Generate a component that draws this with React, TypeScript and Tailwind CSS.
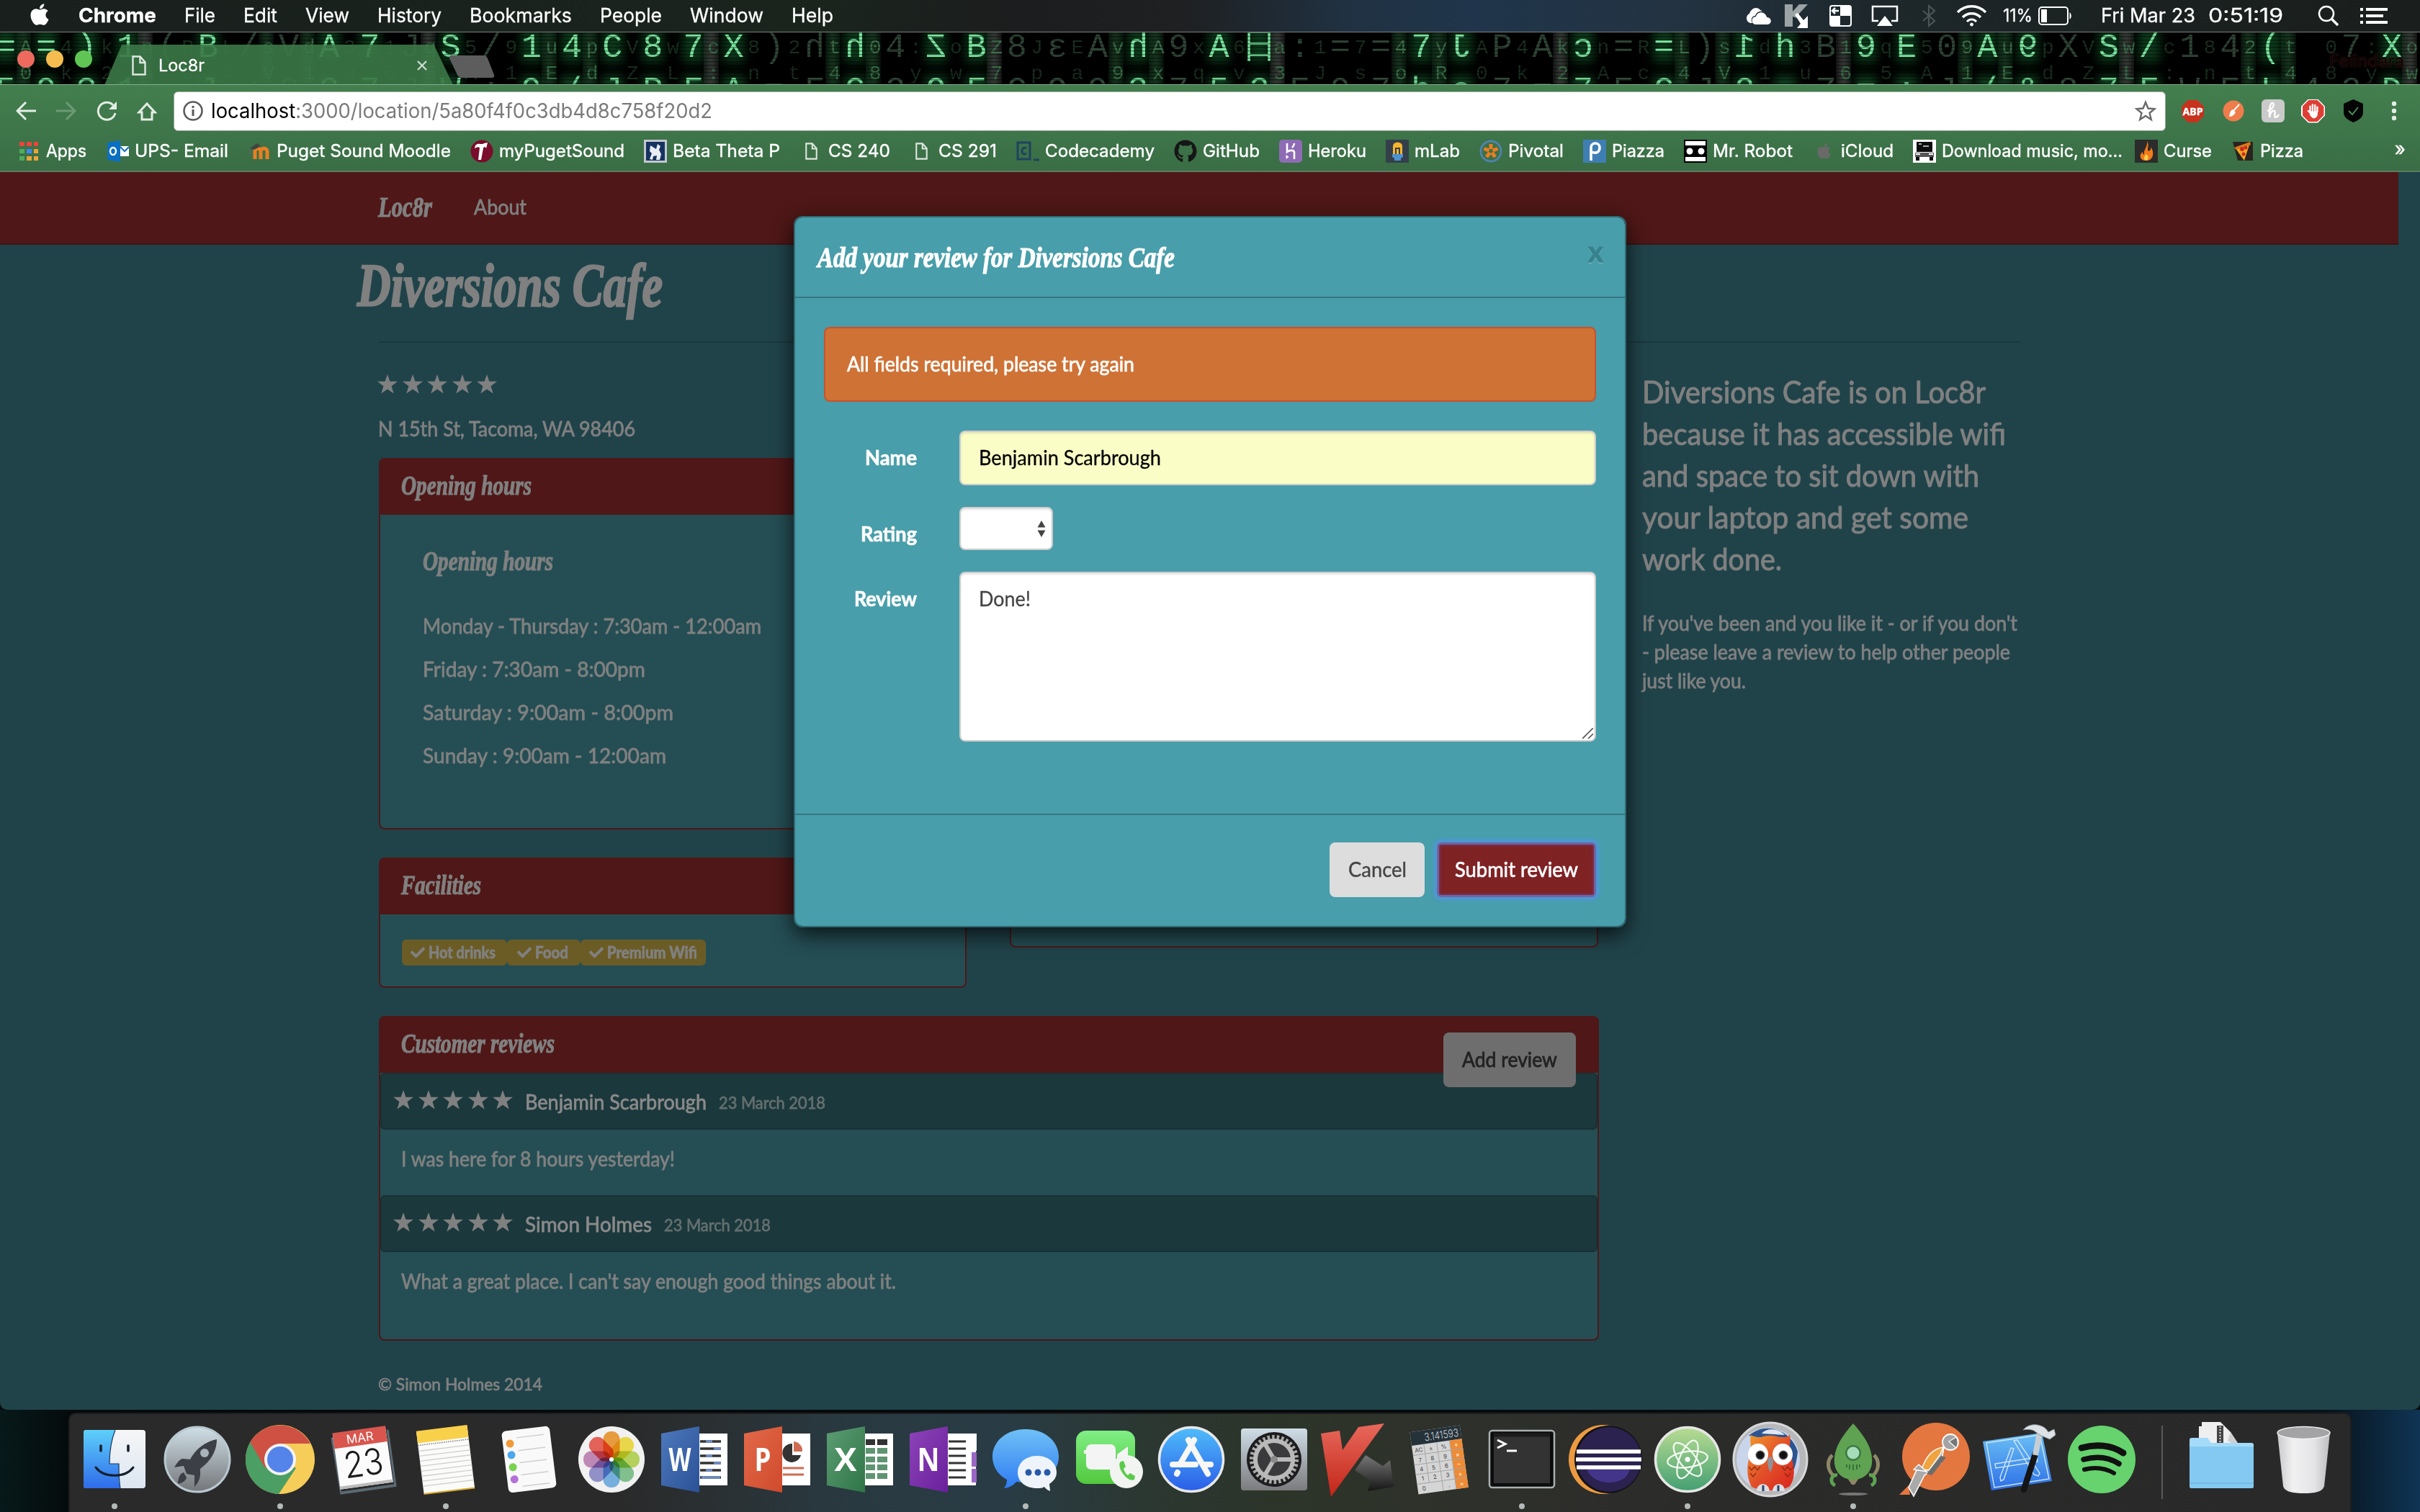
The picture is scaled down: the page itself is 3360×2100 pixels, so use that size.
import { useLayoutEffect, useRef, useState } from "react";
import type { ReactNode } from "react";
import { FaApple, FaGithub, FaCheck } from "react-icons/fa";

/* Text stretched horizontally to fill the width given by its classes. */
function Fit({ className = "", children }: { className?: string; children: ReactNode }) {
  const outer = useRef<HTMLSpanElement>(null);
  const inner = useRef<HTMLSpanElement>(null);
  const [scale, setScale] = useState(1);
  useLayoutEffect(() => {
    if (outer.current && inner.current && inner.current.offsetWidth > 0) {
      setScale(outer.current.clientWidth / inner.current.getBoundingClientRect().width);
    }
  }, []);
  return (
    <span ref={outer} className={"block shrink-0 whitespace-nowrap " + className}>
      <span ref={inner} className="inline-block origin-left" style={{ transform: `scaleX(${scale})` }}>
        {children}
      </span>
    </span>
  );
}

const script = "font-['Liberation_Serif'] font-bold italic [-webkit-text-stroke:1.200px]";

/* ---------- macOS menu bar ---------- */

const menus: [string, string][] = [
  ["Chrome", "w-[108px] font-bold"],
  ["File", "w-[43px]"],
  ["Edit", "w-[47px]"],
  ["View", "w-[61px]"],
  ["History", "w-[89px]"],
  ["Bookmarks", "w-[142px]"],
  ["People", "w-[86px]"],
  ["Window", "w-[102px]"],
  ["Help", "w-[58px]"],
];

function MenuBar() {
  return (
    <div className="flex h-[44px] items-center bg-[linear-gradient(90deg,#191f1d_0%,#1a241d_34%,#1c1d1e_42%,#1e2022_49%,#203243_56%,#20354b_61%,#233342_69%,#1e282c_77%,#1b2120_88%,#1a1f1d_100%)] text-[27px] leading-[44px] text-white [-webkit-text-stroke:0.300px]">
      <FaApple className="ml-[38px] size-[34px] -translate-y-[2px]" />
      <div className="ml-[37px] flex gap-[39px]">
        {menus.map(([t, c]) => (
          <Fit key={t} className={c}>{t}</Fit>
        ))}
      </div>
      <div className="ml-auto flex items-center pr-[45px]">
        <svg className="h-[24px] w-[38px]" viewBox="0 0 38 24" fill="#fff">
          <path d="M8 22a7 7 0 0 1-1-13C9 2 17-2 22 4a8 8 0 0 1 3 2c-5-1-9 2-10 6-4 0-6 4-5 8l1 2z" />
          <path d="M16 24a5.500 5.500 0 0 1 0-11c1-6 9-8 13-3 1 1 2 3 2 4 7 0 8 9 1 10z" />
        </svg>
        <svg className="ml-[18px] h-[34px] w-[34px]" viewBox="0 0 34 34">
          <path d="M0 1h11v10L20 1h12L17 17v3l-6-2v14H0z" fill="#9ba3a5" />
          <path d="M14 15l4-2 8 10 6-6v17H17l5-6z" fill="#fff" />
        </svg>
        <svg className="ml-[28px] h-[30px] w-[31px]" viewBox="0 0 31 30">
          <rect x="1" y="1" width="29" height="28" rx="3" fill="none" stroke="#fff" strokeWidth="2" />
          <path d="M15 1h14v14H15zM2 15h13v14H2z" fill="#fff" />
          <path d="M4 8h9M8 4L4 8l4 4" stroke="#fff" strokeWidth="2.500" fill="none" />
          <path d="M18 22h9M23 18l4 4-4 4" stroke="#1e282c" strokeWidth="2.500" fill="none" />
        </svg>
        <svg className="ml-[27px] h-[30px] w-[38px]" viewBox="0 0 38 30">
          <path d="M10 22H2V2h34v20h-8" fill="none" stroke="#fff" strokeWidth="2.500" />
          <path d="M19 15l11 14H8z" fill="#fff" />
        </svg>
        <svg className="ml-[32px] h-[32px] w-[20px]" viewBox="0 0 20 32">
          <path d="M2 9l16 14-8 7V2l8 7L2 23" fill="none" stroke="#4b5456" strokeWidth="2.200" />
        </svg>
        <svg className="ml-[28px] h-[30px] w-[43px]" viewBox="0 0 43 30" fill="none" stroke="#fff" strokeWidth="3.400">
          <path d="M2 10c11-11 28-11 39 0" />
          <path d="M9 17c7-7 18-7 25 0" />
          <path d="M15 23c4-4 9-4 13 0" strokeWidth="3" />
          <circle cx="21.500" cy="27" r="2" fill="#fff" strokeWidth="1" />
        </svg>
        <Fit className="ml-[22px] w-[41px] text-[24px]">11%</Fit>
        <svg className="ml-[8px] h-[26px] w-[47px]" viewBox="0 0 47 26">
          <rect x="1" y="1" width="40" height="24" rx="4" fill="none" stroke="#fff" strokeWidth="2" />
          <rect x="4" y="4" width="8" height="18" fill="#fff" />
          <path d="M43.500 8c3 2 3 8 0 10z" fill="#fff" />
        </svg>
        <Fit className="ml-[40px] w-[131px]">Fri Mar 23</Fit>
        <Fit className="ml-[18px] w-[104px]">0:51:19</Fit>
        <svg className="ml-[48px] h-[30px] w-[30px]" viewBox="0 0 30 30" fill="none" stroke="#fff">
          <circle cx="12" cy="12" r="10" strokeWidth="2.500" />
          <path d="M19 19l9 9" strokeWidth="3.500" />
        </svg>
        <svg className="ml-[29px] h-[22px] w-[38px]" viewBox="0 0 38 22" fill="#fff">
          <path d="M0 0h4v4H0zM0 9h4v4H0zM0 18h4v4H0zM8 0h30v4H8zM8 9h24v4H8zM8 18h30v4H8z" />
        </svg>
      </div>
    </div>
  );
}

/* ---------- themed tab strip ---------- */

const rainTop = Array.from("==)1(B/VA7JS/14C87X)hh4ZB8εAh9A日:==7JPAɔ==)1hB9E0A9XS/14( 7X)h");
const rainLow = Array.from("59?1-J<C87JW:9/JPFA=FG3OFCO93753E97hэ7=7ECJ2-Z=:J/&87FWEL43D( 5Eh");
const rainMid = Array.from("AaE0w5s41v:c9dk7Ao8u3n4xZ2p1Ry6JtVqL");
const bright = new Set([0, 1, 2, 3, 5, 8, 9, 11, 13, 14, 15, 16, 17, 18, 21, 23, 24, 28, 30, 31, 35, 36, 39, 41, 43, 44, 46, 47, 49, 50, 52, 53, 56, 59]);
const mirrored = new Set([20, 21, 23, 28, 36, 43, 50, 59]);

function CodeRain() {
  return (
    <svg className="h-[72px] w-[3360px]" viewBox="0 0 3360 72" fontFamily="Liberation Mono, monospace" textAnchor="middle">
      <defs>
        <filter id="haze" x="-50%" y="-50%" width="200%" height="200%"><feGaussianBlur stdDeviation="7" /></filter>
        <pattern id="scan" width="6" height="5" patternUnits="userSpaceOnUse"><path d="M0 0h6v1.500H0z" fill="#000" opacity="0.4" /></pattern>
      </defs>
      {Array.from({ length: 60 }, (_, i) => {
        const x = 8 + i * 56.15;
        const on = bright.has(i);
        const streak = (i * 5) % 7;
        return (
          <g key={i}>
            {on && <rect x={x - 15} y={-6} width={30} height={48} fill="#186b33" opacity="0.55" filter="url(#haze)" />}
            {on && <rect x={x - 15} y={60} width={30} height={30} fill="#1d6f38" opacity="0.6" filter="url(#haze)" />}
            {streak < 3 && <rect x={x + 20} y={-10} width={10} height={100} fill={streak === 1 ? "#6d766f" : "#2d6b3f"} opacity="0.85" filter="url(#haze)" />}
            <text x={x + 28} y={29} fontSize="28" fill={streak < 3 ? "#3c6e4a" : "#1a3020"}>{rainMid[(i * 7) % 36]}</text>
            <text x={x + 28} y={65} fontSize="28" fill={streak < 3 ? "#376a45" : "#182c1e"}>{rainMid[(i * 11 + 3) % 36]}</text>
            <text
              transform={mirrored.has(i) ? `translate(${x} 34) scale(-1 1)` : `translate(${x} 34)`}
              fontSize="47"
              fill={on ? "#7ce5a0" : "#2f4536"}
            >
              {rainTop[i]}
            </text>
            <text x={x} y={94} fontSize="47" fill={on ? "#6fd492" : "#33493a"}>{rainLow[i]}</text>
          </g>
        );
      })}
      <rect width="3360" height="72" fill="url(#scan)" />
    </svg>
  );
}

function DocIcon({ className }: { className: string }) {
  return (
    <svg className={className} viewBox="0 0 20 28" fill="none" stroke="#dfe8e0" strokeWidth="2.400">
      <path d="M1.500 1.500h10l7 8v17h-17z" />
      <path d="M11.500 2v8h7" />
    </svg>
  );
}

function TabStrip() {
  return (
    <div className="relative h-[74px] overflow-hidden border-b border-t border-b-[#86ad8d] border-t-[#7d8080] bg-black">
      <CodeRain />
      <div className="absolute inset-0 flex items-start">
        <div className="flex gap-[16px] pl-[24px] pt-[25px]">
          <span className="size-[24px] rounded-full bg-[#ee6a5e]" />
          <span className="size-[24px] rounded-full bg-[#f5bd4f]" />
          <span className="size-[24px] rounded-full bg-[#60c554]" />
        </div>
        <div className="ml-[17px] mt-[17px] flex h-[56px] w-[484px] items-center bg-[#3b7847]/90 pl-[38px] pt-[2px] [clip-path:polygon(5%_0,94.500%_0,100%_100%,0_100%)]">
          <DocIcon className="h-[28px] w-[20px]" />
          <Fit className="ml-[17px] w-[64px] text-[23px] text-white [-webkit-text-stroke:0.300px]">Loc8r</Fit>
          <svg className="ml-[295px] size-[14px]" viewBox="0 0 14 14" stroke="#c9dccd" strokeWidth="2.400">
            <path d="M1 1l12 12M13 1L1 13" />
          </svg>
        </div>
        <svg className="-ml-[6px] mt-[32px] h-[31px] w-[64px]" viewBox="0 0 64 31">
          <path d="M4 0h44q4 0 6 4l9 23q1 4-3 4H18q-4 0-6-4L1 4Q0 0 4 0z" fill="#5d5d5d" />
        </svg>
        <Fit className="ml-auto mr-[22px] mt-[22px] w-[104px] text-[24px] text-[#0b0505] [text-shadow:0_0_2px_#6b2020]">Felindara</Fit>
      </div>
    </div>
  );
}

/* ---------- toolbar ---------- */

function Toolbar() {
  return (
    <div className="flex h-[72px] items-center">
      <svg className="ml-[22px] h-[28px] w-[28px]" viewBox="0 0 28 28" fill="none" stroke="#e4ede5" strokeWidth="3">
        <path d="M28 14H3M14 2L2 14l12 12" />
      </svg>
      <svg className="ml-[28px] h-[28px] w-[28px]" viewBox="0 0 28 28" fill="none" stroke="#6c9a74" strokeWidth="3">
        <path d="M0 14h25M14 2l12 12-12 12" />
      </svg>
      <svg className="ml-[28px] h-[28px] w-[28px]" viewBox="0 0 28 28" fill="none" stroke="#e4ede5" strokeWidth="3">
        <path d="M23 6A12 12 0 1 0 26 17" />
        <path d="M28 1v11H17z" fill="#e4ede5" stroke="none" />
      </svg>
      <svg className="ml-[28px] h-[27px] w-[28px]" viewBox="0 0 28 27" fill="none" stroke="#e4ede5" strokeWidth="3">
        <path d="M14 3L3 15h4v10h14V15h4z" />
      </svg>
      <div className="ml-[23px] flex h-[55px] w-[2766px] items-center rounded-[6px] border border-[#9aa59b] bg-white">
        <svg className="ml-[12px] size-[28px]" viewBox="0 0 28 28" fill="none" stroke="#5a5a5a" strokeWidth="2.600">
          <circle cx="14" cy="14" r="12.500" />
          <path d="M14 12v9M14 7v3" strokeWidth="3" />
        </svg>
        <Fit className="ml-[11px] w-[696px] text-[28px] text-[#7b7b7b]">
          <span className="text-black">localhost</span>:3000/location/5a80f4f0c3db4d8c758f20d2
        </Fit>
        <svg className="ml-auto mr-[12px] size-[30px]" viewBox="0 0 30 30" fill="none" stroke="#6a6a6a" strokeWidth="2.400">
          <path d="M15 3l3.500 8.500 9 .7-7 5.800 2.300 9L15 22l-7.800 5 2.300-9-7-5.800 9-.7z" />
        </svg>
      </div>
      <svg className="ml-[21px] size-[33px]" viewBox="0 0 33 33">
        <path d="M10 1h13l9 9v13l-9 9H10l-9-9V10z" fill="#c7321d" />
        <text x="16.500" y="21.800" fontSize="14" fontWeight="700" fill="#fff" stroke="#fff" strokeWidth="0.500" textAnchor="middle" textLength="28" lengthAdjust="spacingAndGlyphs" fontFamily="Open Sans">ABP</text>
      </svg>
      <svg className="ml-[25px] size-[30px]" viewBox="0 0 30 30">
        <circle cx="15" cy="15" r="14.500" fill="#ef7c4b" />
        <path d="M23 6l-8 9" stroke="#fff" strokeWidth="2" />
        <path d="M14 13l4 4c-2 4-5 6-9 6 1-4 1-8 5-10z" fill="#fff" />
      </svg>
      <svg className="ml-[24px] size-[32px]" viewBox="0 0 32 32">
        <rect width="32" height="32" rx="6" fill="#cacaca" />
        <path d="M8 16c8-2 11-10 7-11-4 0-4 11-4 20 1-7 4-10 7-9 2 2-1 8 1 9 2 0 4-2 5-4" fill="none" stroke="#fff" strokeWidth="2.400" />
      </svg>
      <span className="ml-[23px] flex size-[33px] items-center justify-center bg-white [clip-path:polygon(30%_0,70%_0,100%_30%,100%_70%,70%_100%,30%_100%,0_70%,0_30%)]">
        <span className="flex size-[30px] items-center justify-center bg-[#de3f35] [clip-path:polygon(30%_0,70%_0,100%_30%,100%_70%,70%_100%,30%_100%,0_70%,0_30%)]">
          <svg className="h-[22px] w-[18px]" viewBox="0 0 20 24" stroke="#fff" strokeWidth="2.600" strokeLinecap="round" fill="#fff">
            <path d="M5 13V5M8.700 12V2.500M12.500 12V3M16 13V6M5 15l-3-3" />
            <path d="M5 13h11v4c0 4-3 6-5 6s-4-1-6-5z" strokeWidth="1" />
          </svg>
        </span>
      </span>
      <svg className="ml-[26px] h-[32px] w-[27px]" viewBox="0 0 27 32">
        <path d="M13.500 0L27 6v12c0 7-6 11-13.500 14C6 29 0 25 0 18V6z" fill="#050505" />
        <path d="M7 16l5 5 8-10" stroke="#4c8c58" strokeWidth="2" fill="none" />
      </svg>
      <svg className="ml-[39px] h-[28px] w-[8px]" viewBox="0 0 8 28" fill="#e4ede5">
        <circle cx="4" cy="4" r="3.200" />
        <circle cx="4" cy="14" r="3.200" />
        <circle cx="4" cy="24" r="3.200" />
      </svg>
    </div>
  );
}

const box = "size-[32px] shrink-0";

const bookmarks: { name: string; w: string; icon: ReactNode }[] = [
  {
    name: "Apps",
    w: "w-[56px]",
    icon: (
      <svg className={box} viewBox="0 0 32 32">
        <path d="M3 3h7v6H3zM13 3h7v6h-7zM23 3h6v6h-6z" fill="#e8453c" />
        <path d="M3 13h7v6H3zM3 23h7v6H3z" fill="#4fae5b" />
        <path d="M13 13h7v6h-7z" fill="#3f86f4" />
        <path d="M23 13h6v6h-6zM13 23h7v6h-7zM23 23h6v6h-6z" fill="#eaa43a" />
      </svg>
    ),
  },
  {
    name: "UPS- Email",
    w: "w-[130px]",
    icon: (
      <svg className={box} viewBox="0 0 32 32">
        <path d="M2 4l18-3v30L2 28z" fill="#0b6fc4" />
        <ellipse cx="10" cy="16" rx="4" ry="5" fill="none" stroke="#fff" strokeWidth="2.400" />
        <path d="M20 9h12v14H20z" fill="#fff" />
        <path d="M20 10l6 6 6-6" fill="none" stroke="#0b6fc4" strokeWidth="2" />
      </svg>
    ),
  },
  {
    name: "Puget Sound Moodle",
    w: "w-[242px]",
    icon: (
      <svg className={box} viewBox="0 0 32 32" fill="none">
        <path d="M10 27V16c0-5 8-5 8 0v11M18 16c0-5 9-5 9 0v11" stroke="#ea7f22" strokeWidth="5" />
        <path d="M3 12l10-7 5 4-9 5z" fill="#3e4640" />
        <path d="M3 12v9" stroke="#55605a" strokeWidth="2" />
      </svg>
    ),
  },
  {
    name: "myPugetSound",
    w: "w-[174px]",
    icon: (
      <svg className={box} viewBox="0 0 32 32">
        <circle cx="16" cy="16" r="15.500" fill="#7a0c2c" />
        <path d="M7 8c4-5 9 0 12-3l5-1-2 8c-2-3-3-2-4 0l-3 16h-4l2-17c-3-2-4 0-7 1z" fill="#fff" />
      </svg>
    ),
  },
  {
    name: "Beta Theta P",
    w: "w-[149px]",
    icon: (
      <svg className={box} viewBox="0 0 32 32">
        <rect x="1.500" y="1.500" width="29" height="29" fill="#16335f" stroke="#c3c8cf" strokeWidth="3" />
        <path d="M9 8l8 5 2-7 4 3-2 5 3 6-2 8h-5l1-6-5 1-1 5-4-1 3-8-3-3z" fill="#e9edf3" />
      </svg>
    ),
  },
  { name: "CS 240", w: "w-[86px]", icon: <span className={box + " flex items-center justify-center"}><DocIcon className="h-[24px] w-[17px]" /></span> },
  { name: "CS 291", w: "w-[81px]", icon: <span className={box + " flex items-center justify-center"}><DocIcon className="h-[24px] w-[17px]" /></span> },
  {
    name: "Codecademy",
    w: "w-[152px]",
    icon: (
      <svg className={box} viewBox="0 0 32 32" fill="none" stroke="#1f4260" strokeWidth="3">
        <path d="M2 4h17v23H2zM24 28h8" />
        <path d="M14 12c-3-2-6 0-6 4s3 5 6 3" />
      </svg>
    ),
  },
  { name: "GitHub", w: "w-[79px]", icon: <FaGithub className={box + " text-[#161616]"} /> },
  {
    name: "Heroku",
    w: "w-[81px]",
    icon: (
      <svg className={box} viewBox="0 0 32 32">
        <rect width="32" height="32" rx="5" fill="#8f6bb5" />
        <path d="M11 5v12c4-3 10-3 10 1v9M21 5c0 3-1 4-3 6" stroke="#fff" strokeWidth="2.600" fill="none" />
        <path d="M9.500 21l4 3-4 3z" fill="#fff" />
      </svg>
    ),
  },
  {
    name: "mLab",
    w: "w-[63px]",
    icon: (
      <svg className={box} viewBox="0 0 32 32">
        <rect width="32" height="32" fill="#343f4a" />
        <path d="M10 20V9c0-7 13-7 13 0v11z" fill="#f6b52b" />
        <path d="M14 20v-8h5v8" fill="none" stroke="#343f4a" strokeWidth="2" />
        <path d="M9 20h15v4l-3 2v3h-9v-3l-3-2z" fill="#4d91cf" />
      </svg>
    ),
  },
  {
    name: "Pivotal",
    w: "w-[77px]",
    icon: (
      <svg className={box} viewBox="0 0 32 32">
        <circle cx="16" cy="16" r="14" fill="none" stroke="#5183ae" strokeWidth="2.800" />
        <g stroke="#ee7d22" strokeWidth="5">
          <path d="M16 13V6M18.500 15l7-2.500M17.500 18l4.500 6M14.500 18L10 24M13.500 15l-7-2.500" />
        </g>
      </svg>
    ),
  },
  {
    name: "Piazza",
    w: "w-[73px]",
    icon: (
      <svg className={box} viewBox="0 0 32 32">
        <rect width="32" height="32" fill="#3f7eb3" />
        <path d="M11 29V11c0-8 12-8 12 0s-7 8-11 6" fill="none" stroke="#fff" strokeWidth="3.600" />
      </svg>
    ),
  },
  {
    name: "Mr. Robot",
    w: "w-[111px]",
    icon: (
      <svg className={box} viewBox="0 0 32 32">
        <rect width="32" height="32" fill="#000" />
        <path d="M2 2h28v6H2zM2 24h28v6H2z" fill="#fff" />
        <ellipse cx="8" cy="16" rx="4.500" ry="4.500" fill="#fff" />
        <ellipse cx="24" cy="16" rx="4.500" ry="4.500" fill="#fff" />
      </svg>
    ),
  },
  { name: "iCloud", w: "w-[73px]", icon: <span className={box + " flex items-center justify-center"}><FaApple className="size-[25px] text-[#6a6968]" /></span> },
  {
    name: "Download music, mo...",
    w: "w-[251px] -mr-[10px]",
    icon: (
      <svg className={box} viewBox="0 0 32 32">
        <rect width="32" height="32" fill="#fff" />
        <path d="M5 3h22v14H5zM4 24h5v5H4zM23 24h5v5h-5z" fill="#0c0c0c" />
        <path d="M3 18h26v6H3z" fill="#555" />
        <path d="M8 6h4M14 9h8" stroke="#ddd" strokeWidth="1.500" />
        <path d="M4 20h6M22 20h6" stroke="#fff" strokeWidth="2" />
      </svg>
    ),
  },
  {
    name: "Curse",
    w: "w-[67px]",
    icon: (
      <svg className={box} viewBox="0 0 32 32">
        <rect width="32" height="32" fill="#2b2b2b" />
        <path d="M17 2c4 7-1 10 2 14 3-1 4-3 3-6 5 6 5 18-5 19C6 30 6 20 11 17c0 3 1 4 2 3-1-6 5-10 4-18z" fill="#f27a1a" />
        <path d="M16 20c4 3 3 8 0 9-4-1-4-5 0-9z" fill="#ffd04a" />
      </svg>
    ),
  },
  {
    name: "Pizza",
    w: "w-[60px]",
    icon: (
      <svg className={box} viewBox="0 0 32 32">
        <path d="M2 3h28v26H9z" fill="#2a2320" />
        <path d="M5 11L26 4 18 29z" fill="#f3a41f" />
        <path d="M4 11L26 3l1 4L7 14z" fill="#d8791a" />
        <circle cx="15" cy="13" r="3" fill="#c92a24" />
        <circle cx="20" cy="11" r="2.500" fill="#c92a24" />
        <circle cx="17" cy="20" r="2.500" fill="#c92a24" />
      </svg>
    ),
  },
];

function BookmarkBar() {
  return (
    <div className="flex h-[47px] items-center gap-[27px] pb-[9px] pl-[24px] pt-[1px] text-[24px] text-white [-webkit-text-stroke:0.400px]">
      {bookmarks.map((b) => (
        <div key={b.name} className="flex shrink-0 items-center gap-[8px]">
          {b.icon}
          <Fit className={b.w}>{b.name}</Fit>
        </div>
      ))}
      <span className="ml-auto -mt-[6px] pr-[20px] text-[26px]">»</span>
    </div>
  );
}

/* ---------- page ---------- */

function Stars() {
  return (
    <span className="flex gap-[6.500px]">
      {[0, 1, 2, 3, 4].map((i) => (
        <svg key={i} className="h-[27px] w-[28px]" viewBox="0 0 28 27" fill="#808080">
          <path d="M14 0l3.400 9.700H28l-8.500 6.500 3.200 10.300L14 20.400 5.300 26.500l3.200-10.300L0 9.700h10.600z" />
        </svg>
      ))}
    </span>
  );
}

const panel = "rounded-[8px] border-2 border-[#4f1717] bg-[#244e54]";

function PanelHead({ title, w, children }: { title: string; w: string; children?: ReactNode }) {
  return (
    <div className="flex h-[77px] items-start justify-between rounded-t-[5px] bg-[#4f1717] pl-[29px]">
      <Fit className={script + " text-[38px] leading-[73px] " + w}>{title}</Fit>
      {children}
    </div>
  );
}

function Review({ name, nameW, date, text, textW }: { name: string; nameW: string; date: string; text: string; textW: string }) {
  return (
    <div className="h-[170px]">
      <div className="flex h-[79px] items-center rounded-[6px] border-2 border-[#183135] bg-[#1b383c] pl-[16px]">
        <span className="-mt-[4px]"><Stars /></span>
        <Fit className={"ml-[17px] text-[#8a8a8a] " + nameW}>{name}</Fit>
        <Fit className="ml-[17px] mt-[2px] w-[148px] text-[24px] text-[#64706f]">{date}</Fit>
      </div>
      <Fit className={"ml-[29px] leading-[80px] " + textW}>{text}</Fit>
    </div>
  );
}

function LocationPage() {
  return (
    <div className="h-[1719px] overflow-hidden rounded-b-[10px] bg-[#20434a] font-['Lato',sans-serif] text-[29px] leading-[40px] text-[#808080] [-webkit-text-stroke:0.800px]">
      <div className="flex h-[101px] w-[3330px] items-center border-b-2 border-[#401416] bg-[#4f1717] pb-[3px] pl-[525px]">
        <Fit className={script + " w-[75px] text-[41px]"}>Loc8r</Fit>
        <Fit className="ml-[58px] w-[73px]">About</Fit>
      </div>
      <h1 className={script + " ml-[496px] h-[112px] pt-[1px] text-[84px] leading-[112px] [-webkit-text-stroke:2.500px]"}>
        <Fit className="w-[424px]">Diversions Cafe</Fit>
      </h1>
      <div className="ml-[526px] mt-[22px] h-[2px] w-[2280px] bg-[#1b383c]" />
      <div className="ml-[526px] flex gap-[60px]">
        <div className="w-[1694px]">
          <div className="flex gap-[61px] pt-[44px]">
            <div className="w-[816px]">
              <div className="-ml-[2px]"><Stars /></div>
              <Fit className="-ml-[1px] mt-[28px] w-[357px]">N 15th St, Tacoma, WA 98406</Fit>
              <section className={panel + " mt-[21px] h-[516px]"}>
                <PanelHead title="Opening hours" w="w-[181px]" />
                <div className="pl-[59px] pt-[39px]">
                  <Fit className={script + " w-[181px] text-[38px] leading-[50px]"}>Opening hours</Fit>
                  <div className="mt-[35px] leading-[60px]">
                    <Fit className="w-[470px]">Monday - Thursday : 7:30am - 12:00am</Fit>
                    <Fit className="w-[309px]">Friday : 7:30am - 8:00pm</Fit>
                    <Fit className="w-[348px]">Saturday : 9:00am - 8:00pm</Fit>
                    <Fit className="w-[338px]">Sunday : 9:00am - 12:00am</Fit>
                  </div>
                </div>
              </section>
              <section className={panel + " mt-[39px] h-[181px]"}>
                <PanelHead title="Facilities" w="w-[111px]" />
                <div className="flex pl-[30px] pt-[35px] text-[22px] font-bold leading-[36px]">
                  <span className="flex w-[146px] items-center rounded-[6px] bg-[#6b5c25] pl-[12px]">
                    <FaCheck className="size-[20px]" />
                    <Fit className="ml-[5px] w-[93px]">Hot drinks</Fit>
                  </span>
                  <span className="flex w-[102px] items-center rounded-[6px] bg-[#6b5c25] pl-[14px]">
                    <FaCheck className="size-[20px]" />
                    <Fit className="ml-[5px] w-[46px]">Food</Fit>
                  </span>
                  <span className="flex w-[174px] items-center rounded-[6px] bg-[#6b5c25] pl-[12px]">
                    <FaCheck className="size-[20px]" />
                    <Fit className="ml-[5px] w-[125px]">Premium Wifi</Fit>
                  </span>
                </div>
              </section>
            </div>
            <section className={panel + " -ml-[1px] h-[796px] w-[817px]"} />
          </div>
          <section className={panel + " mt-[39px] h-[451px]"}>
            <PanelHead title="Customer reviews" w="w-[213px]">
              <button className="relative mr-[30px] mt-[21px] flex h-[76px] w-[184px] items-center justify-center rounded-[8px] bg-[#6e6e6e] pb-[2px] text-[#222]">
                <Fit className="w-[132px]">Add review</Fit>
              </button>
            </PanelHead>
            <Review name="Benjamin Scarbrough" nameW="w-[252px]" date="23 March 2018" text="I was here for 8 hours yesterday!" textW="w-[380px]" />
            <Review name="Simon Holmes" nameW="w-[176px]" date="23 March 2018" text="What a great place. I can't say enough good things about it." textW="w-[687px]" />
          </section>
          <footer className="-ml-[1px] mt-[40px] text-[24px]">
            <Fit className="w-[228px]">© Simon Holmes 2014</Fit>
          </footer>
        </div>
        <aside className="pt-[39px]">
          <div className="text-[43px] leading-[58px] [-webkit-text-stroke:1px]">
            <Fit className="w-[477px]">Diversions Cafe is on Loc8r</Fit>
            <Fit className="w-[505px]">because it has accessible wifi</Fit>
            <Fit className="w-[468px]">and space to sit down with</Fit>
            <Fit className="w-[453px]">your laptop and get some</Fit>
            <Fit className="w-[194px]">work done.</Fit>
          </div>
          <div className="mt-[40px]">
            <Fit className="w-[521px]">If you've been and you like it - or if you don't</Fit>
            <Fit className="w-[511px]">- please leave a review to help other people</Fit>
            <Fit className="w-[144px]">just like you.</Fit>
          </div>
        </aside>
      </div>
    </div>
  );
}

/* ---------- review dialog ---------- */

function FieldRow({ label, labelW, className, children }: { label: string; labelW: string; className: string; children: ReactNode }) {
  return (
    <div className={"flex items-start " + className}>
      <div className="mr-[59px] flex w-[130px] justify-end font-bold leading-[74px]">
        <Fit className={labelW}>{label}</Fit>
      </div>
      {children}
    </div>
  );
}

const field = "rounded-[8px] border-2 border-[#ccc] pl-[25px] leading-[70px] shadow-[inset_0_2px_3px_rgba(0,0,0,0.100)]";

function ReviewDialog() {
  return (
    <div className="absolute left-[1102px] top-[300px] flex h-[988px] w-[1156px] flex-col rounded-[12px] border-2 border-[#306972] bg-[#489eaa] bg-clip-padding font-['Lato',sans-serif] text-[29px] leading-[40px] text-white shadow-[0_10px_30px_rgba(0,0,0,0.750)] [-webkit-text-stroke:0.700px]">
      <div className="flex h-[112px] items-start justify-between border-b-2 border-[#367680] pl-[31px] pr-[30px]">
        <Fit className={script + " w-[496px] text-[41px] leading-[110px]"}>Add your review for Diversions Cafe</Fit>
        <span className="mt-[27px] text-[40px] font-bold leading-[40px] text-[#37818c] [-webkit-text-stroke:1px] [text-shadow:0_2px_0_#6fb5be]">x</span>
      </div>
      <div className="h-[716px] pl-[39px] pr-[40px] pt-[40px]">
        <div className="ml-[1px] h-[104px] rounded-[8px] border-2 border-[#c9512d] bg-[#cf7235] pl-[30px]">
          <Fit className="w-[399px] leading-[98px]">All fields required, please try again</Fit>
        </div>
        <FieldRow label="Name" labelW="w-[72px]" className="mt-[40px] h-[76px]">
          <div className={field + " h-[76px] w-[884px] bg-[#fafdc5] text-black [-webkit-text-stroke:0.300px]"}>
            <Fit className="w-[253px]">Benjamin Scarbrough</Fit>
          </div>
        </FieldRow>
        <FieldRow label="Rating" labelW="w-[78px]" className="mt-[30px] h-[60px]">
          <div className={field + " flex h-[60px] w-[130px] items-center justify-end bg-white pr-[8px]"}>
            <svg className="h-[23px] w-[12px]" viewBox="0 0 12 23" fill="#444">
              <path d="M6 0l5.500 9.500H.5zM6 23L.5 13.500h11z" />
            </svg>
          </div>
        </FieldRow>
        <FieldRow label="Review" labelW="w-[87px]" className="mt-[30px] h-[236px]">
          <div className={field + " flex h-[236px] w-[884px] items-start justify-between bg-white text-[#444] [-webkit-text-stroke:0.300px]"}>
            <Fit className="w-[72px]">Done!</Fit>
            <svg className="mb-[2px] mr-[2px] size-[15px] self-end" viewBox="0 0 15 15" stroke="#555" strokeWidth="1.600">
              <path d="M0 15L15 0M8 15l7-7" />
            </svg>
          </div>
        </FieldRow>
      </div>
      <div className="flex flex-1 justify-end gap-[17px] border-t-2 border-[#367680] pr-[40px] pt-[38px]">
        <button className="flex h-[76px] w-[132px] items-center justify-center rounded-[8px] bg-[#ddd] pb-[2px] text-[#444] [-webkit-text-stroke:0.400px]">
          <Fit className="w-[81px]">Cancel</Fit>
        </button>
        <button className="flex h-[76px] w-[221px] items-center justify-center rounded-[6px] border-[3px] border-[#6d65a4] bg-[#7f2224] pb-[2px] shadow-[0_0_5px_4px_#4f96dc,inset_0_0_3px_2px_#7a3050]">
          <Fit className="w-[171px]">Submit review</Fit>
        </button>
      </div>
    </div>
  );
}

/* ---------- dock ---------- */

function OfficeIcon({ letter, from, to, children }: { letter: string; from: string; to: string; children: ReactNode }) {
  return (
    <>
      <defs>
        <linearGradient id={"of" + letter} x1="0" x2="1" y1="0" y2="1">
          <stop offset="0" stopColor={from} />
          <stop offset="1" stopColor={to} />
        </linearGradient>
      </defs>
      <path d="M57 14h39v72H57z" fill="#fff" />
      {children}
      <path d="M4 14L57 4v92L4 86z" fill={"url(#of" + letter + ")"} />
      <text x="30" y="66" fontSize="44" fontWeight="700" fill="#fff" textAnchor="middle" textLength={letter === "P" ? 23 : 31} lengthAdjust="spacingAndGlyphs" fontFamily="Open Sans">{letter}</text>
    </>
  );
}

const petals = ["#f39a2d", "#f6e03a", "#b9d84e", "#7cc48a", "#6fb1e8", "#8f8fd0", "#c583b8", "#f0574c"];

const dock: { id: string; on?: boolean; art: ReactNode }[] = [
  {
    id: "finder",
    on: true,
    art: (
      <>
        <defs>
          <linearGradient id="fb" x1="0" x2="0" y1="0" y2="1"><stop offset="0" stopColor="#5ed0fa" /><stop offset="1" stopColor="#2f6bea" /></linearGradient>
          <linearGradient id="fw" x1="0" x2="0" y1="0" y2="1"><stop offset="0" stopColor="#f6f6f7" /><stop offset="1" stopColor="#dce6f2" /></linearGradient>
        </defs>
        <rect x="7" y="9" width="86" height="81" rx="4" fill="url(#fw)" />
        <path d="M51 9H11q-4 0-4 4v73q0 4 4 4h47c-2-11-2-22-2-34H43c0-17 3-34 8-47z" fill="url(#fb)" />
        <path d="M51 9c-5 13-8 30-8 47h13c0 12 0 23 2 34" fill="none" stroke="#1d3a5c" strokeWidth="1.200" />
        <path d="M31 31v7M69 31v7" stroke="#16212e" strokeWidth="3.600" strokeLinecap="round" />
        <path d="M24 61c11 15 41 15 52 0" fill="none" stroke="#16212e" strokeWidth="3" strokeLinecap="round" />
      </>
    ),
  },
  {
    id: "launchpad",
    art: (
      <>
        <defs><linearGradient id="lp" x1="0" x2="0" y1="0" y2="1"><stop offset="0" stopColor="#cfdfe6" /><stop offset="1" stopColor="#747679" /></linearGradient></defs>
        <circle cx="50" cy="50" r="45" fill="url(#lp)" stroke="#b9c8d0" strokeWidth="3" />
        <path d="M77 22C61 25 47 36 40 50l-11-1c-5 2-8 7-11 12l13-2 4 11 11 2 0 16c4-4 7-9 8-16l0-9C69 52 77 38 77 22z" fill="#3c4046" />
        <circle cx="60" cy="41" r="6" fill="#a9b4ba" />
        <path d="M31 68c-5 1-8 8-8 16 6-1 11-4 12-9z" fill="#3c4046" />
      </>
    ),
  },
  {
    id: "chrome",
    on: true,
    art: (
      <>
        <circle cx="50" cy="50" r="48" fill="#f6cd58" />
        <path d="M50 50L8.400 26A48 48 0 0 0 48 98l24-36z" fill="#4b9e64" />
        <path d="M8.400 26A48 48 0 0 1 92 28H50l-21 34z" fill="#ce5144" />
        <circle cx="50" cy="50" r="22" fill="#f3f3f3" />
        <circle cx="50" cy="50" r="18" fill="#5484ea" />
      </>
    ),
  },
  {
    id: "calendar",
    art: (
      <g transform="rotate(-8 50 50)">
        <path d="M10 14h4v76h74V14h3v80H12z" fill="#5b6a73" />
        <rect x="13" y="9" width="74" height="78" fill="#fbfbfb" />
        <path d="M13 83h74v4H13z" fill="#bbb" />
        <rect x="13" y="8" width="74" height="22" fill="#d9564e" />
        <text x="50" y="25.500" fontSize="17" fill="#fff" textAnchor="middle" fontFamily="Inter" textLength="38" lengthAdjust="spacingAndGlyphs">MAR</text>
        <text x="50" y="73" fontSize="50" fontWeight="300" fill="#1b1b1b" textAnchor="middle" fontFamily="Inter" textLength="55" lengthAdjust="spacingAndGlyphs">23</text>
      </g>
    ),
  },
  {
    id: "notes",
    on: true,
    art: (
      <g transform="rotate(-7 50 50)">
        <rect x="14" y="7" width="71" height="87" fill="#fbfbfa" />
        <path d="M14 94h71" stroke="#d9a92d" strokeWidth="2" />
        <rect x="14" y="6" width="71" height="17" fill="#f8d04a" />
        <path d="M14 26h71" stroke="#777" strokeWidth="1.500" strokeDasharray="1.500 1.500" />
        <path d="M14 34h71M14 41h71M14 48h71M14 55h71M14 62h71M14 69h71M14 76h71M14 83h71" stroke="#cfcfcd" strokeWidth="1.300" />
      </g>
    ),
  },
  {
    id: "reminders",
    art: (
      <g transform="rotate(-7 50 50)">
        <rect x="17" y="7" width="67" height="86" rx="6" fill="#f9f9f9" />
        <path d="M37 18h38M37 36h38M37 53h38M37 70h38M37 86h38" stroke="#cfcfcf" strokeWidth="1.400" />
        <circle cx="27" cy="25" r="5.500" fill="#f29a38" />
        <circle cx="27" cy="41" r="5.500" fill="#4ba7ee" />
        <circle cx="27" cy="58" r="5.500" fill="#7bd150" />
        <circle cx="27" cy="75" r="5.500" fill="#b472d8" />
      </g>
    ),
  },
  {
    id: "photos",
    art: (
      <>
        <circle cx="50" cy="50" r="46" fill="#f1f1f1" />
        {petals.map((c, i) => (
          <rect key={c} x="38.500" y="11" width="23" height="38" rx="11" fill={c} opacity="0.9" transform={`rotate(${i * 45} 50 50)`} className="mix-blend-multiply" />
        ))}
        <circle cx="50" cy="50" r="3" fill="#fff" />
      </>
    ),
  },
  {
    id: "word",
    art: (
      <OfficeIcon letter="W" from="#4d79bd" to="#2b5196">
        <path d="M58 25h29M58 35h29M58 45h29M58 55h29M58 65h29M58 75h29" stroke="#333" strokeWidth="3.500" />
        <path d="M66 25h9M77 35h10M66 45h9M77 55h10M66 65h9M60 75h26" stroke="#6e8cc4" strokeWidth="3.500" />
      </OfficeIcon>
    ),
  },
  {
    id: "powerpoint",
    art: (
      <OfficeIcon letter="P" from="#e2694a" to="#cf4b2c">
        <path d="M71 28a13 13 0 1 0 12 16H71z" fill="#333" />
        <path d="M73 25a13 13 0 0 1 12 14H73z" fill="#cf6b52" />
        <path d="M58 62h29M58 71h29" stroke="#cf6b52" strokeWidth="3" />
      </OfficeIcon>
    ),
  },
  {
    id: "excel",
    art: (
      <OfficeIcon letter="X" from="#5d9d74" to="#2e7546">
        <path d="M58 22h13v8H58zM74 22h14v8H74z" fill="#333" />
        <path d="M58 34h13v8H58zM74 34h14v8H74zM58 46h13v8H58zM74 46h14v8H74zM58 57h13v8H58zM74 57h14v8H74zM58 69h13v8H58zM74 69h14v8H74z" fill="#5f9473" />
      </OfficeIcon>
    ),
  },
  {
    id: "onenote",
    art: (
      <OfficeIcon letter="N" from="#8c44b8" to="#6a1f9c">
        <path d="M90 14h7v24h-7z" fill="#fff" />
        <path d="M90 40h7v20h-7zM90 63h7v19h-7z" fill="#9a66c4" />
        <path d="M58 25h24M58 35h24M58 45h24M58 55h24M58 65h24M58 75h24" stroke="#333" strokeWidth="3" />
      </OfficeIcon>
    ),
  },
  {
    id: "messages",
    on: true,
    art: (
      <>
        <defs><linearGradient id="ms" x1="0" x2="0" y1="0" y2="1"><stop offset="0" stopColor="#6fc0f7" /><stop offset="1" stopColor="#2f7cf2" /></linearGradient></defs>
        <path d="M50 8C23 8 4 25 4 46c0 14 8 26 20 32 0 6-2 9-4 12 8-1 13-4 17-9 32 5 59-9 59-35C96 25 77 8 50 8z" fill="url(#ms)" />
        <path d="M66 45c-16 0-27 10-27 23s11 22 27 22c4 0 7 0 10-2 2 3 5 5 8 6 0-4-1-7-1-10 6-4 10-9 10-16 0-13-11-23-27-23z" fill="#eef4fa" />
        <circle cx="54" cy="68" r="4.500" fill="#2759a8" /><circle cx="67" cy="68" r="4.500" fill="#2759a8" /><circle cx="80" cy="68" r="4.500" fill="#2759a8" />
      </>
    ),
  },
  {
    id: "facetime",
    art: (
      <>
        <defs><linearGradient id="ft" x1="0" x2="0" y1="0" y2="1"><stop offset="0" stopColor="#80ee85" /><stop offset="1" stopColor="#52c83e" /></linearGradient></defs>
        <rect x="5" y="10" width="82" height="74" rx="14" fill="url(#ft)" />
        <rect x="19" y="29" width="41" height="35" rx="7" fill="#f4f4f4" />
        <path d="M62 43l15-11v30H62zM16 37h3v5h-3z" fill="#f4f4f4" />
        <circle cx="75" cy="67" r="23" fill="#f2f4f2" />
        <path d="M67 53c-7 6 9 30 19 25l1-5-7-4-3 3c-3-2-5-6-6-9l3-3-3-8z" fill="#5bcb4b" />
      </>
    ),
  },
  {
    id: "appstore",
    art: (
      <>
        <defs><linearGradient id="as" x1="0" x2="0" y1="0" y2="1"><stop offset="0" stopColor="#4fbdfa" /><stop offset="1" stopColor="#2a5de8" /></linearGradient></defs>
        <circle cx="50" cy="50" r="44.500" fill="url(#as)" stroke="#e9e9ea" strokeWidth="3.500" />
        <g stroke="#f7f7f7" strokeWidth="8" strokeLinecap="round">
          <path d="M54 23L34 57M46 23l27 47M24 57h32M69 57h8M31 68l-1 2" />
        </g>
      </>
    ),
  },
  {
    id: "preferences",
    art: (
      <>
        <defs><linearGradient id="sp" x1="0" x2="0" y1="0" y2="1"><stop offset="0" stopColor="#cfdde6" /><stop offset="1" stopColor="#7b7b7e" /></linearGradient></defs>
        <rect x="4" y="7" width="92" height="86" rx="4" fill="url(#sp)" />
        <circle cx="50" cy="50" r="38" fill="#1d1d1f" />
        <circle cx="50" cy="50" r="31" fill="none" stroke="#a9a9a9" strokeWidth="6" strokeDasharray="3.500 3" />
        <circle cx="50" cy="50" r="26" fill="#3a3a3c" stroke="#b9b9b9" strokeWidth="6" />
        <path d="M50 50h24M50 50L37 28M50 50L37 72" stroke="#b9b9b9" strokeWidth="6" />
        <circle cx="50" cy="50" r="5" fill="#8a8a8a" />
      </>
    ),
  },
  {
    id: "antivirus",
    art: (
      <>
        <defs>
          <linearGradient id="av" x1="0" x2="0" y1="0" y2="1"><stop offset="0" stopColor="#e8695c" /><stop offset="1" stopColor="#c22517" /></linearGradient>
          <linearGradient id="aw" x1="0" x2="0" y1="0" y2="1"><stop offset="0" stopColor="#777" /><stop offset="1" stopColor="#161616" /></linearGradient>
        </defs>
        <path d="M0 14l26-4 4 27 22-32 36-5L14 102z" fill="url(#av)" />
        <path d="M62 44l24 15 10-8 5 37-36 6 4-14-22-15z" fill="url(#aw)" />
      </>
    ),
  },
  {
    id: "calculator",
    art: (
      <g transform="rotate(-8 50 50)">
        <rect x="15" y="7" width="70" height="87" fill="#d5d5d6" />
        <rect x="15" y="7" width="70" height="19" fill="#26323a" />
        <text x="82" y="22" fontSize="15" fontWeight="300" fill="#c6ced2" textAnchor="end" fontFamily="Inter" textLength="48" lengthAdjust="spacingAndGlyphs">3.141593</text>
        <rect x="68" y="26" width="17" height="68" fill="#ee8b35" />
        <path d="M15 39.500h70M15 53h70M15 66.500h70M15 80h70M32 26v54M50 26v68M68 26v68" stroke="#a5a5a6" strokeWidth="1" />
        <g fontSize="8" fill="#444" fontFamily="Inter" textAnchor="middle">
          <text x="24" y="36">AC</text><text x="41" y="36">±</text><text x="59" y="36">%</text>
          <text x="24" y="50">7</text><text x="41" y="50">8</text><text x="59" y="50">9</text>
          <text x="24" y="63">4</text><text x="41" y="63">5</text><text x="59" y="63">6</text>
          <text x="24" y="76">1</text><text x="41" y="76">2</text><text x="59" y="76">3</text>
          <text x="24" y="90">0</text><text x="59" y="90">.</text>
        </g>
        <g fontSize="9" fill="#fff" fontFamily="Inter" textAnchor="middle">
          <text x="76.500" y="36">÷</text><text x="76.500" y="50">×</text><text x="76.500" y="63">−</text><text x="76.500" y="77">+</text><text x="76.500" y="91">=</text>
        </g>
      </g>
    ),
  },
  {
    id: "terminal",
    on: true,
    art: (
      <>
        <rect x="5" y="10" width="90" height="79" rx="4" fill="#0c0c0c" stroke="#a9b1b1" strokeWidth="2.500" />
        <rect x="11" y="16" width="78" height="67" fill="#333" />
        <path d="M11 16h78" stroke="#1c1c1c" strokeWidth="5" />
        <path d="M16 23l11 5.500-11 5.500M29 38h14" fill="none" stroke="#fff" strokeWidth="3" />
      </>
    ),
  },
  {
    id: "eclipse",
    art: (
      <>
        <circle cx="48" cy="50" r="48" fill="#ec9a41" />
        <circle cx="55" cy="50" r="47" fill="#111" />
        <circle cx="56" cy="50" r="45" fill="#2b2250" />
        <path d="M25 62h60c-2 14-15 20-29 20S27 74 25 62z" fill="#43368a" />
        <path d="M11 39h89M10 50h91M11 61h89" stroke="#fff" strokeWidth="5.500" />
      </>
    ),
  },
  {
    id: "atom",
    on: true,
    art: (
      <>
        <defs><linearGradient id="at" x1="0" x2="0" y1="0" y2="1"><stop offset="0" stopColor="#b9dc93" /><stop offset="1" stopColor="#439f72" /></linearGradient></defs>
        <circle cx="50" cy="50" r="44.500" fill="url(#at)" stroke="#e4e6e4" strokeWidth="3.500" />
        <g fill="none" stroke="#f4faf2" strokeWidth="2.200" transform="rotate(-8 50 50)">
          <ellipse cx="50" cy="50" rx="28" ry="11" />
          <ellipse cx="50" cy="50" rx="28" ry="11" transform="rotate(60 50 50)" />
          <ellipse cx="50" cy="50" rx="28" ry="11" transform="rotate(120 50 50)" />
        </g>
        <circle cx="50" cy="50" r="3.500" fill="#fff" />
      </>
    ),
  },
  {
    id: "owl",
    art: (
      <>
        <defs><linearGradient id="ow" x1="0" x2="1" y1="0" y2="1"><stop offset="0" stopColor="#f09a2a" /><stop offset="0.500" stopColor="#e2502a" /><stop offset="1" stopColor="#d9231c" /></linearGradient></defs>
        <circle cx="50" cy="50" r="51" fill="#b7b8ba" stroke="#d7d8da" strokeWidth="3" />
        <circle cx="47" cy="50" r="44" fill="#c9d5ea" />
        <path d="M20 17c25-22 60-6 68 22-3 28-10 38-24 48 14-34 4-64-44-70z" fill="#2d5590" />
        <path d="M38 14c6-8 24-8 32 2z" fill="#dfe6f2" />
        <path d="M23 16c6 4 10 3 14 3 10-3 16-3 26 0 6 0 10 1 14-3 2 10-1 16-1 22 8 20 10 38 0 50-14 7-38 7-52 0-10-18-5-38 0-50-1-8-3-14-1-22z" fill="url(#ow)" />
        <ellipse cx="33" cy="43" rx="14" ry="15" fill="#fff" /><ellipse cx="67" cy="43" rx="14" ry="15" fill="#fff" />
        <circle cx="36" cy="44" r="6.500" fill="#555" /><circle cx="68" cy="44" r="6.500" fill="#555" />
        <circle cx="36" cy="44" r="5" fill="#111" /><circle cx="68" cy="44" r="5" fill="#111" />
        <path d="M50 46c6 2 5 11 0 22-5-11-6-20 0-22z" fill="#8e9297" />
        <path d="M20 60l4 5 4-5 4 5 4-5M22 69l4 5 4-5M66 60l4 5 4-5 4 5 4-5M70 69l4 5 4-5" fill="none" stroke="#8d2a18" strokeWidth="1.300" />
        <path d="M31 94c0-13 17-13 18 0zM53 94c1-13 17-13 17 0z" fill="#dcdfe3" />
        <path d="M40 86v8M61 86v8" stroke="#26466e" strokeWidth="3" />
      </>
    ),
  },
  {
    id: "robo",
    on: true,
    art: (
      <>
        <path d="M21 44c-8 8-7 20 1 28M79 44c8 8 7 20-1 28" fill="none" stroke="#8d8866" strokeWidth="5" />
        <path d="M42 76h16l-6 9h-4z" fill="#8d8866" />
        <path d="M50 0c14 16 28 34 26 56-2 14-12 22-26 22S26 70 24 56C22 34 36 16 50 0z" fill="#5fa352" />
        <circle cx="50" cy="41" r="11" fill="#3c7a44" /><circle cx="50" cy="41" r="8.500" fill="#a6dcb8" />
        <path d="M41 57v4M45 57v7M50 57v8M55 57v7M59 57v4" stroke="#2f6431" strokeWidth="1.600" />
        <path d="M28 72c-8-2-12 10-3 14M72 72c8-2 12 10 3 14" fill="none" stroke="#5fa352" strokeWidth="5" />
        <ellipse cx="50" cy="98" rx="20" ry="2" fill="#777" />
      </>
    ),
  },
  {
    id: "postman",
    art: (
      <>
        <circle cx="50" cy="46" r="47" fill="#e4773f" />
        <path d="M12 86L-1 99h15z" fill="#e4773f" />
        <path d="M61 33L57 55 34 72 19 101l-7-12 11-24 16-4z" fill="#a9a9a9" stroke="#fff" strokeWidth="1.600" />
        <path d="M60 33c-14 2-24 12-30 31l10 1 16-22z" fill="#f0a33f" stroke="#fff" strokeWidth="1.500" />
        <path d="M26 57l-7 7 18 3z" fill="#a9a9a9" stroke="#fff" strokeWidth="1.300" />
        <path d="M57 45l7 2-20 25-7-2z" fill="#6d6d6d" />
        <circle cx="70" cy="26" r="11" fill="#a4a4a4" stroke="#fff" strokeWidth="1.800" />
        <path d="M78 19l-10 6 10 9c3-4 3-11 0-15z" fill="#777" stroke="#fff" strokeWidth="1.200" />
      </>
    ),
  },
  {
    id: "xcode",
    art: (
      <>
        <defs><linearGradient id="xc" x1="0" x2="0" y1="0" y2="1"><stop offset="0" stopColor="#6bc0f5" /><stop offset="1" stopColor="#2d6fe6" /></linearGradient></defs>
        <path d="M0 25l82-12 14 67-84 13z" fill="url(#xc)" />
        <g fill="none" stroke="#cfe7fb" strokeWidth="1.400">
          <path d="M5 27l74-11 13 61-76 12z" />
          <path d="M43 24l5-1 31 46-2 4-6-2zM39 34l4 1-14 43-4 2-1-5zM17 56l58-9 1 6-58 9z" />
        </g>
        <path d="M73 42L57 92" stroke="#151515" strokeWidth="8.500" strokeLinecap="round" />
        <path d="M80 8L73 44" stroke="#c6cdd3" strokeWidth="8" />
        <path d="M56 9c8-10 24-9 32-1l3 4 8-4 2 8-8 6-14-6-8-6c-5-2-10-2-15-1z" fill="#dde2e6" stroke="#8a9298" strokeWidth="1" />
      </>
    ),
  },
  {
    id: "spotify",
    art: (
      <>
        <circle cx="50" cy="50" r="47" fill="#66d36e" />
        <g fill="none" stroke="#111" strokeLinecap="round">
          <path d="M22 34c20-6 42-4 58 7" strokeWidth="9" />
          <path d="M25 50c18-5 35-3 49 6" strokeWidth="7.500" />
          <path d="M26 64c16-4 29-2 41 5" strokeWidth="6" />
        </g>
      </>
    ),
  },
];

function Dock() {
  return (
    <div className="flex h-[142px] items-end justify-between bg-[linear-gradient(90deg,#07191a_0%,#050a0b_3%,#060809_50%,#08121a_96%,#0f3454_100%)] pl-[95px] pr-[95px]">
      <div className="flex h-[138px] w-[3170px] rounded-t-[10px] border-x-2 border-t-2 border-[#1d1d1d] bg-[linear-gradient(90deg,#2a2a2a_0%,#2a2a2a_24%,#2a3134_29%,#29383f_33%,#293c45_41%,#2b3731_47%,#2d3429_54%,#2e302b_62%,#2b2b2a_72%,#292929_100%)] pl-[5px]">
        {dock.map((d) => (
          <div key={d.id} className="flex w-[114.950px] shrink-0 flex-col items-center pt-[13px]">
            <svg className="size-[100px] overflow-visible" viewBox="0 0 100 100">{d.art}</svg>
            {d.on && <span className="mt-[11px] h-[8px] w-[8px] rounded-full bg-[#b4bab8]" />}
          </div>
        ))}
        <div className="ml-[26px] mt-[16px] h-[102px] w-[2px] bg-[#5a5a5a]" />
        <svg className="ml-[32px] mt-[13px] size-[100px] overflow-visible" viewBox="0 0 100 100">
          <path d="M22 -2h26l14 14 16 26H18V4h4z" fill="#efefef" />
          <path d="M62 12l-4 12 20 12z" fill="#cfcfcf" />
          <path d="M43 3h9v34h-9z" fill="#444" /><path d="M47.500 4v34" stroke="#ddd" strokeWidth="2" strokeDasharray="2 2" />
          <path d="M5 23q0-3 3-3h22l5 7h56q3 0 3 3v57q0 3-3 3H8q-3 0-3-3z" fill="#a3dbf8" />
          <path d="M5 32h89v55q0 3-3 3H8q-3 0-3-3z" fill="#84c9f1" />
          <path d="M5 83h89" stroke="#74b4da" strokeWidth="1.500" />
        </svg>
        <svg className="ml-[14px] mt-[13px] size-[100px]" viewBox="0 0 100 100">
          <defs><linearGradient id="tr" x1="0" x2="1" y1="0" y2="0"><stop offset="0" stopColor="#c9c9cb" /><stop offset="0.300" stopColor="#f1f1f2" /><stop offset="0.700" stopColor="#e4e4e6" /><stop offset="1" stopColor="#bcbcbe" /></linearGradient></defs>
          <path d="M13 13l8 74c2 8 14 10 29 10s26-2 28-10l8-74z" fill="url(#tr)" />
          <ellipse cx="49.500" cy="13" rx="36.500" ry="8.500" fill="#a3a3a5" stroke="#eee" strokeWidth="1.600" />
        </svg>
      </div>
    </div>
  );
}

export default function App() {
  return (
    <div className="relative h-[2100px] w-[3360px] overflow-hidden bg-[#060c0d] font-['Inter',sans-serif]">
      <MenuBar />
      <TabStrip />
      <div className="h-[121px] border-b-2 border-[#5b7a60] bg-[linear-gradient(180deg,#437f4e,#3a6d45)]">
        <Toolbar />
        <BookmarkBar />
      </div>
      <LocationPage />
      <ReviewDialog />
      <Dock />
    </div>
  );
}
